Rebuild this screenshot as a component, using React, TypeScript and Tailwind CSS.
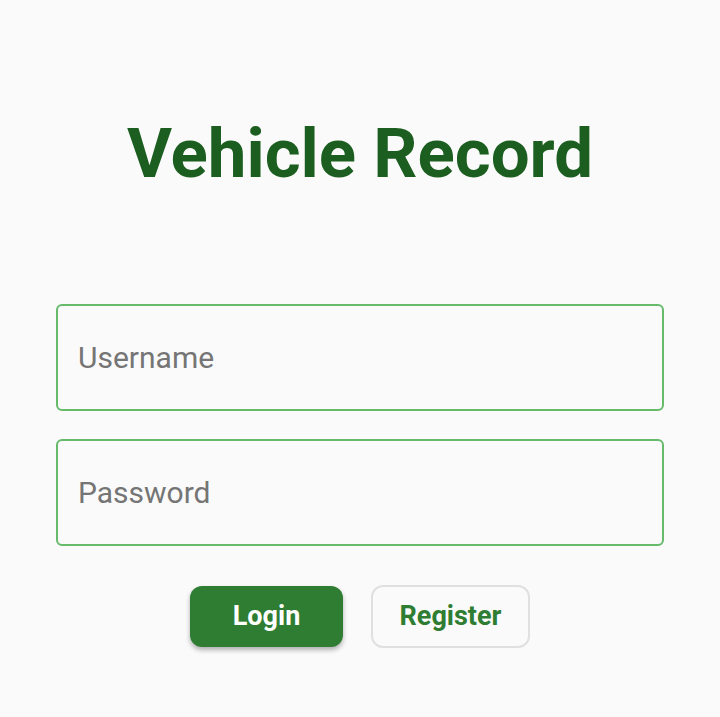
export default function App() {
  return (
    <div className="min-h-[717px] w-[720px] bg-[#fafafa] font-['Roboto',sans-serif]">
      <div className="flex flex-col px-14 pt-[112px]">
        <h1 className="text-center text-[69px] font-bold leading-[84px] text-[#1b5e20]">Vehicle Record</h1>

        <div className="mt-[108px] flex flex-col gap-[28px]">
          <input
            placeholder="Username"
            className="h-[107px] w-full rounded-[6px] border-2 border-[#66bb6a] bg-transparent px-5 text-[30px] text-[#333] placeholder:text-[#757575] outline-none"
          />
          <input
            type="password"
            placeholder="Password"
            className="h-[107px] w-full rounded-[6px] border-2 border-[#66bb6a] bg-transparent px-5 text-[30px] text-[#333] placeholder:text-[#757575] outline-none"
          />
        </div>

        <div className="mt-[39px] flex items-center justify-center gap-[28px]">
          <button className="h-[61px] w-[153px] rounded-[12px] bg-[#2e7d32] text-[27px] font-bold text-white shadow-[0_3px_5px_rgba(0,0,0,0.3)]">
            Login
          </button>
          <button className="h-[63px] w-[159px] rounded-[12px] border-2 border-[#e0e0e0] bg-transparent text-[27px] font-bold text-[#2e7d32]">
            Register
          </button>
        </div>
      </div>
    </div>
  );
}
